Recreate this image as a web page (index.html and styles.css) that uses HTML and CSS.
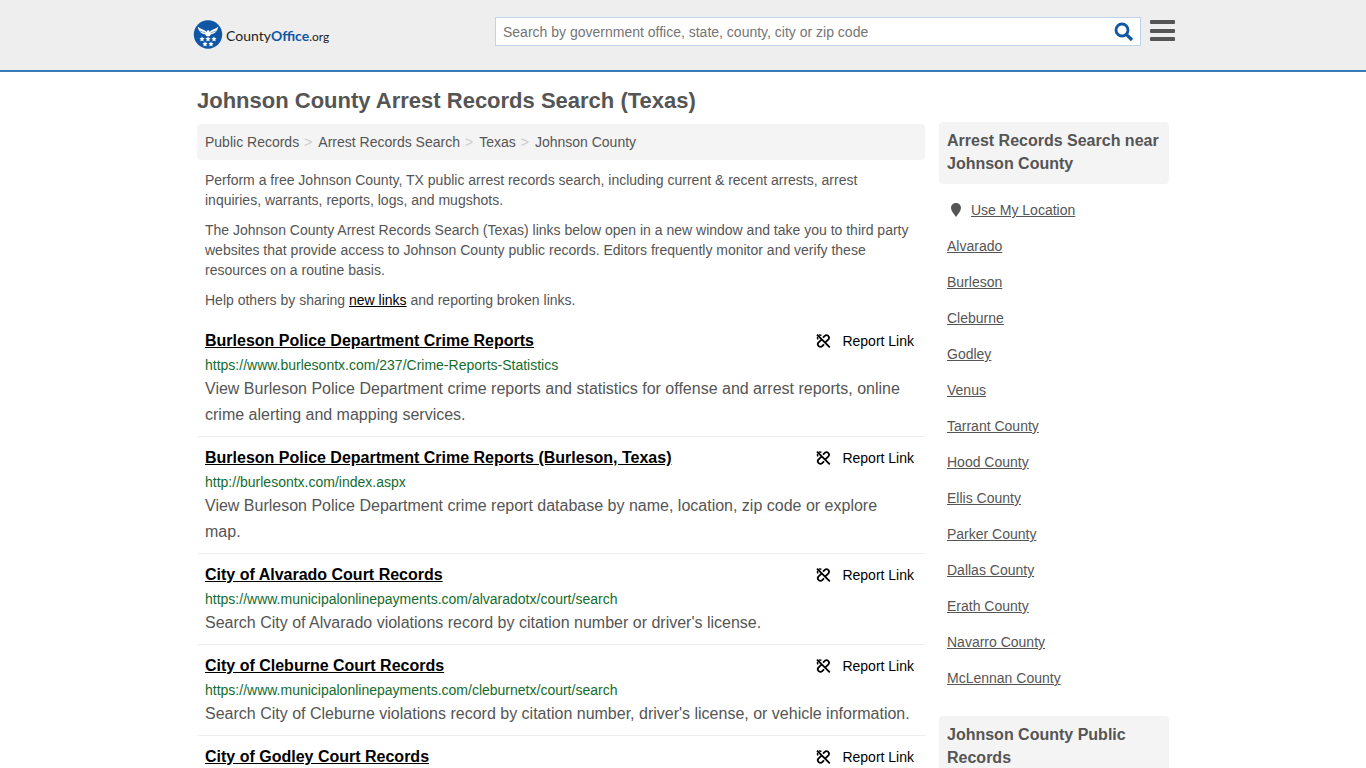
FILE: index.html
```html
<!DOCTYPE html>
<html lang="en">
<head>
    <meta charset="UTF-8">
    <meta name="viewport" content="width=device-width, initial-scale=1.0">
    <title>Johnson County Arrest Records Search (Texas)</title>
    <link rel="stylesheet" href="styles.css">
</head>
<body>
    <!-- icon shared by every result -->
    <svg class="sprite" aria-hidden="true">
        <symbol id="icon-unlink" viewBox="0 0 16 16">
            <path d="M2 1.6 L14.8 14.4 M8 4.6 L9.8 2.8 C12 .8 15.4 4 13.4 6.4 L10.6 9.2 M9 11.4 L7.2 13.2 C5 15.2 1.4 12 3.4 9.6 L6.2 6.8" fill="none" stroke="#000" stroke-width="1.8"/>
            <path d="M6.4 2.6 C5.8 2 4.8 1.8 4 2.2 M2.6 3.8 C2.2 4.8 2.4 5.8 3.2 6.4" fill="none" stroke="#000" stroke-width="1.4"/>
        </symbol>
    </svg>

    <header class="site-header">
        <div class="container header-row">
            <a href="#" class="logo" aria-label="CountyOffice.org">
                <svg class="logo-badge" viewBox="0 0 30 30" aria-hidden="true">
                    <circle cx="15" cy="14.5" r="14.2" fill="#0f57a5"/>
                    <path d="M4.8 6.5 C7.5 9.5 11 9 13.6 12 L14 10.4 L16 10.2 L16.6 12 C19 9 22.5 9.5 25.2 6.5 C24.8 10.5 22 13.8 18 14.2 L16.6 16.2 H13.4 L12 14.2 C8 13.8 5.2 10.5 4.8 6.5 Z" fill="#fff"/>
                    <path d="M7 11 L12.5 13 M23 11 L17.5 13" stroke="#0f57a5" stroke-width=".5"/>
                    <g fill="#fff">
                        <path id="star" d="M9 16.4 l.8 1.7 1.8.2 -1.3 1.3 .3 1.8 -1.6-.9 -1.6.9 .3-1.8 -1.3-1.3 1.8-.2z"/>
                        <use href="#star" x="6"/>
                        <use href="#star" x="12"/>
                        <use href="#star" x="3" y="5"/>
                        <use href="#star" x="9" y="5"/>
                    </g>
                </svg>
                <span class="logo-text">County<b>Office</b><span class="logo-tld">.org</span></span>
            </a>
            <form class="search" role="search">
                <input type="text" aria-label="Search" placeholder="Search by government office, state, county, city or zip code">
                <button type="button" aria-label="Search">
                    <svg width="20" height="20" viewBox="0 0 20 20" aria-hidden="true">
                        <circle cx="8" cy="8" r="6" fill="none" stroke="#0f57a5" stroke-width="2.8"/>
                        <path d="M12.3 12.3 L18 18" stroke="#0f57a5" stroke-width="3.2"/>
                    </svg>
                </button>
            </form>
            <button type="button" class="menu-button" aria-label="Menu">
                <svg width="26" height="22" viewBox="0 0 26 22" aria-hidden="true">
                    <g fill="#555">
                        <rect x="1" y="0" width="25" height="4" rx="1"/>
                        <rect x="1" y="9" width="25" height="4" rx="1"/>
                        <rect x="1" y="17" width="25" height="4" rx="1"/>
                    </g>
                </svg>
            </button>
        </div>
    </header>

    <div class="container page">
        <main class="main">
            <h1>Johnson County Arrest Records Search (Texas)</h1>
            <nav aria-label="Breadcrumb">
                <ol class="breadcrumb">
                    <li><a href="#">Public Records</a></li>
                    <li><a href="#">Arrest Records Search</a></li>
                    <li><a href="#">Texas</a></li>
                    <li><a href="#">Johnson County</a></li>
                </ol>
            </nav>
            <div class="intro">
                <p>Perform a free Johnson County, TX public arrest records search, including current &amp; recent arrests, arrest inquiries, warrants, reports, logs, and mugshots.</p>
                <p>The Johnson County Arrest Records Search (Texas) links below open in a new window and take you to third party websites that provide access to Johnson County public records. Editors frequently monitor and verify these resources on a routine basis.</p>
                <p>Help others by sharing <a href="#">new links</a> and reporting broken links.</p>
            </div>

            <ul class="results">
                <li class="result">
                    <div class="result-head">
                        <a href="#" class="result-title">Burleson Police Department Crime Reports</a>
                        <button type="button" class="report"><svg><use href="#icon-unlink"/></svg>Report Link</button>
                    </div>
                    <div class="result-url">https://www.burlesontx.com/237/Crime-Reports-Statistics</div>
                    <p>View Burleson Police Department crime reports and statistics for offense and arrest reports, online crime alerting and mapping services.</p>
                </li>
                <li class="result">
                    <div class="result-head">
                        <a href="#" class="result-title">Burleson Police Department Crime Reports (Burleson, Texas)</a>
                        <button type="button" class="report"><svg><use href="#icon-unlink"/></svg>Report Link</button>
                    </div>
                    <div class="result-url">http://burlesontx.com/index.aspx</div>
                    <p>View Burleson Police Department crime report database by name, location, zip code or explore map.</p>
                </li>
                <li class="result">
                    <div class="result-head">
                        <a href="#" class="result-title">City of Alvarado Court Records</a>
                        <button type="button" class="report"><svg><use href="#icon-unlink"/></svg>Report Link</button>
                    </div>
                    <div class="result-url">https://www.municipalonlinepayments.com/alvaradotx/court/search</div>
                    <p>Search City of Alvarado violations record by citation number or driver's license.</p>
                </li>
                <li class="result">
                    <div class="result-head">
                        <a href="#" class="result-title">City of Cleburne Court Records</a>
                        <button type="button" class="report"><svg><use href="#icon-unlink"/></svg>Report Link</button>
                    </div>
                    <div class="result-url">https://www.municipalonlinepayments.com/cleburnetx/court/search</div>
                    <p>Search City of Cleburne violations record by citation number, driver's license, or vehicle information.</p>
                </li>
                <li class="result">
                    <div class="result-head">
                        <a href="#" class="result-title">City of Godley Court Records</a>
                        <button type="button" class="report"><svg><use href="#icon-unlink"/></svg>Report Link</button>
                    </div>
                </li>
            </ul>
        </main>

        <aside class="sidebar">
            <h2>Arrest Records Search near Johnson County</h2>
            <ul class="nearby">
                <li>
                    <svg class="pin" width="18" height="14" viewBox="0 0 18 14" aria-hidden="true">
                        <path d="M9 0 C12 0 14 2.2 14 5 C14 8 11 11 9 14 C7 11 4 8 4 5 C4 2.2 6 0 9 0 Z" fill="#555"/>
                    </svg>
                    <a href="#">Use My Location</a>
                </li>
                <li><a href="#">Alvarado</a></li>
                <li><a href="#">Burleson</a></li>
                <li><a href="#">Cleburne</a></li>
                <li><a href="#">Godley</a></li>
                <li><a href="#">Venus</a></li>
                <li><a href="#">Tarrant County</a></li>
                <li><a href="#">Hood County</a></li>
                <li><a href="#">Ellis County</a></li>
                <li><a href="#">Parker County</a></li>
                <li><a href="#">Dallas County</a></li>
                <li><a href="#">Erath County</a></li>
                <li><a href="#">Navarro County</a></li>
                <li><a href="#">McLennan County</a></li>
            </ul>
            <h2>Johnson County Public Records</h2>
        </aside>
    </div>
</body>
</html>
```
FILE: styles.css
```css
* {
    box-sizing: border-box;
}

body {
    margin: 0;
    background-color: #fff;
    color: #555;
    font-family: Arial, "Liberation Sans", sans-serif;
    font-size: 14px;
    line-height: 20px;
}

ul, ol {
    list-style: none;
    margin: 0;
    padding: 0;
}

button {
    background: none;
    border: none;
    padding: 0;
    font: inherit;
    cursor: pointer;
}

.sprite {
    display: none;
}

.container {
    max-width: 972px;
    margin: 0 auto;
}

.site-header {
    background-color: #eee;
    border-bottom: 2px solid #337ab7;
    padding: 16px 0 20px;
}

.header-row {
    display: flex;
    align-items: flex-start;
}

.logo {
    display: flex;
    align-items: center;
    gap: 3px;
    margin: 4px auto 0 -4px;
    color: #222;
    text-decoration: none;
}

.logo-badge {
    width: 30px;
    height: 30px;
}

.logo-text {
    padding-top: 2px;
    font-family: Lato, sans-serif;
    font-size: 14px;
}

.logo-text b {
    color: #0f57a5;
}

.logo-tld {
    font-size: 12px;
}

.search {
    display: flex;
    align-items: center;
    width: 646px;
    margin: 1px 8px 0 16px;
    background-color: #fff;
    border: 1px solid #bcd3ea;
}

.search input {
    flex: 1;
    height: 27px;
    padding: 0 7px;
    border: none;
    background: none;
    font: inherit;
}

.search input::placeholder {
    color: #757575;
}

.search button {
    display: flex;
    margin-right: 6px;
}

.menu-button {
    display: flex;
    margin: 4px -6px 0 0;
}

.page {
    display: flex;
    align-items: flex-start;
    gap: 14px;
}

.main {
    flex: 1;
    min-width: 0;
}

h1 {
    margin: 17px 0 11px;
    font-size: 22px;
    line-height: 24px;
}

.breadcrumb {
    display: flex;
    padding: 8px;
    border-radius: 4px;
    background-color: #f4f4f4;
}

.breadcrumb li + li::before {
    content: ">";
    padding: 0 6px 0 5px;
    color: #ccc;
}

.breadcrumb a {
    color: inherit;
    text-decoration: none;
}

.intro {
    padding: 0 8px;
}

.intro p {
    margin: 10px 0;
}

.intro a {
    color: #000;
}

.result {
    padding: 8px;
    border-bottom: 1px solid #eee;
    font-size: 16px;
    line-height: 26px;
}

.result-head {
    display: flex;
    justify-content: space-between;
}

.result-title {
    color: #000;
    font-weight: bold;
}

.report {
    display: flex;
    align-items: center;
    gap: 11px;
    margin-right: 3px;
    color: #000;
    font-size: 14px;
}

.report svg {
    width: 16px;
    height: 16px;
}

.result-url {
    color: #146c2e;
    font-size: 14px;
    line-height: 22px;
}

.result p {
    margin: 0;
}

.sidebar {
    width: 230px;
    margin-top: 50px;
}

.sidebar h2 {
    margin: 0;
    padding: 7px 8px 9px;
    border-radius: 4px;
    background-color: #f4f4f4;
    font-size: 16px;
    line-height: 23px;
}

.nearby {
    margin: 8px 0 20px;
    padding: 0 8px;
}

.nearby li {
    display: flex;
    align-items: center;
    gap: 6px;
    height: 36px;
}

.nearby a {
    color: inherit;
}
```
